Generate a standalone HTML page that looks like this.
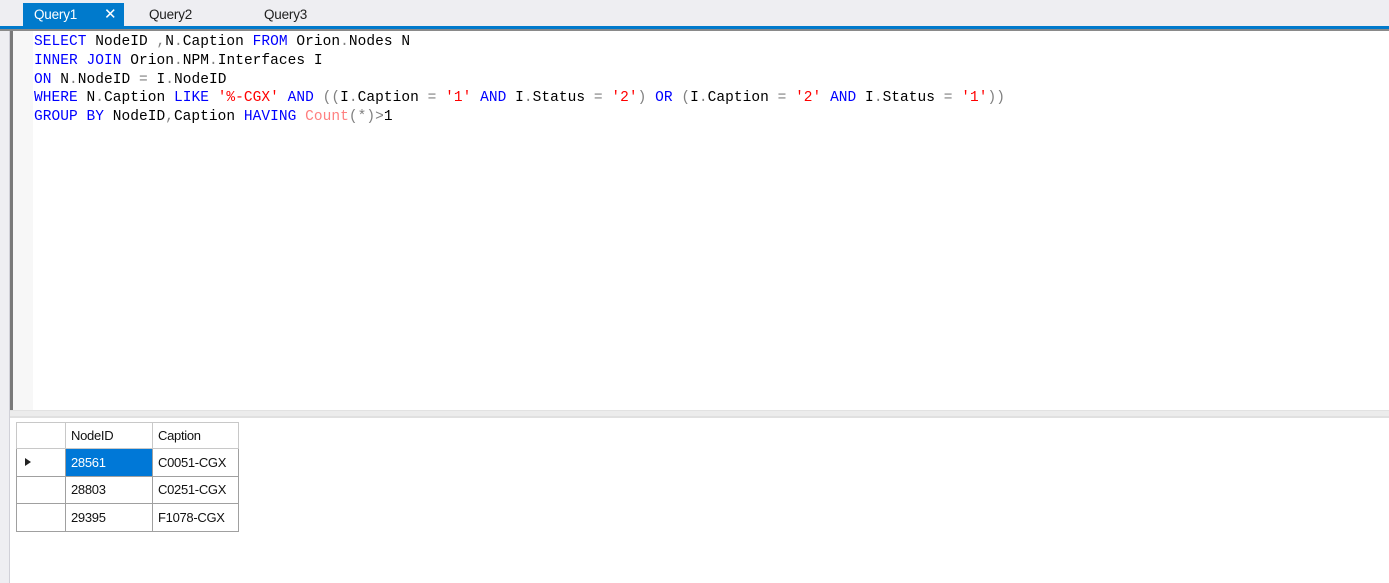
<!DOCTYPE html>
<html><head><meta charset="utf-8"><style>
*{margin:0;padding:0;box-sizing:border-box}
body{width:1389px;height:583px;background:#fff;position:relative;overflow:hidden;font-family:"Liberation Sans",sans-serif}
.tabbar{position:absolute;left:0;top:0;width:1389px;height:26px;background:#eeeef2}
.tab{position:absolute;top:3px;height:23px;font-size:13.5px;color:#1e1e1e;line-height:23px;letter-spacing:-0.2px}
.t1{left:23px;width:101px;background:#007acc;color:#fff;padding-left:11px}
.t1 .x{position:absolute;left:81px;top:0;font-size:15px}
.blue{position:absolute;left:0;top:26px;width:1389px;height:3px;background:#007acc}
.gray{position:absolute;left:0;top:29px;width:1389px;height:2px;background:#8a8a8a}
.lside{position:absolute;left:0;top:31px;width:10px;height:552px;background:#eeeef2;border-right:1px solid #d0d0d8}
.ldark{position:absolute;left:10px;top:31px;width:3px;height:379px;background:#7a7a7a}
.margin{position:absolute;left:13px;top:31px;width:20px;height:379px;background:#f7f7f7}
.code{position:absolute;left:34px;top:33px;font-family:"Liberation Mono",monospace;font-size:14.5px;letter-spacing:0.044px;line-height:18.8px;color:#000;white-space:pre}
.k{color:#0000ff}.s{color:#ff0000}.o{color:#808080}.f{color:#ff8080}
.split{position:absolute;left:10px;top:410px;width:1379px;height:8px;background:#ececec;border-top:1px solid #e2e2e2;border-bottom:2px solid #e0e0e0}
.grid{position:absolute;left:16px;top:422px;border-collapse:collapse;font-size:13px;letter-spacing:-0.3px;color:#111;table-layout:fixed}
.grid td{border:1px solid #a0a0a0;height:27.5px;padding:0 5px}
.grid tr:first-child td{height:26px;border-color:#c8c8c8}
</style></head><body>
<div class="tabbar">
<div class="tab t1">Query1<span class="x">✕</span></div>
<div class="tab" style="left:149px">Query2</div>
<div class="tab" style="left:264px">Query3</div>
</div>
<div class="blue"></div><div class="gray"></div>
<div class="lside"></div><div class="ldark"></div><div class="margin"></div>
<div class="code"><span class="k">SELECT</span> NodeID <span class="o">,</span>N<span class="o">.</span>Caption <span class="k">FROM</span> Orion<span class="o">.</span>Nodes N
<span class="k">INNER JOIN</span> Orion<span class="o">.</span>NPM<span class="o">.</span>Interfaces I
<span class="k">ON</span> N<span class="o">.</span>NodeID <span class="o">=</span> I<span class="o">.</span>NodeID
<span class="k">WHERE</span> N<span class="o">.</span>Caption <span class="k">LIKE</span> <span class="s">'%-CGX'</span> <span class="k">AND</span> <span class="o">((</span>I<span class="o">.</span>Caption <span class="o">=</span> <span class="s">'1'</span> <span class="k">AND</span> I<span class="o">.</span>Status <span class="o">=</span> <span class="s">'2'</span><span class="o">)</span> <span class="k">OR</span> <span class="o">(</span>I<span class="o">.</span>Caption <span class="o">=</span> <span class="s">'2'</span> <span class="k">AND</span> I<span class="o">.</span>Status <span class="o">=</span> <span class="s">'1'</span><span class="o">))</span>
<span class="k">GROUP BY</span> NodeID<span class="o">,</span>Caption <span class="k">HAVING</span> <span class="f">Count</span><span class="o">(*)&gt;</span>1</div>
<div class="split"></div>
<table class="grid" style="width:222px">
<colgroup><col style="width:49px"><col style="width:87px"><col style="width:86px"></colgroup>
<tr><td></td><td>NodeID</td><td>Caption</td></tr>
<tr><td><svg width="8" height="10" style="display:block;margin-left:2px"><path d="M1 1 L7 5 L1 9Z" fill="#222"/></svg></td><td style="background:#0078d7;color:#fff">28561</td><td>C0051-CGX</td></tr>
<tr><td></td><td>28803</td><td>C0251-CGX</td></tr>
<tr><td></td><td>29395</td><td>F1078-CGX</td></tr>
</table>
</body></html>
